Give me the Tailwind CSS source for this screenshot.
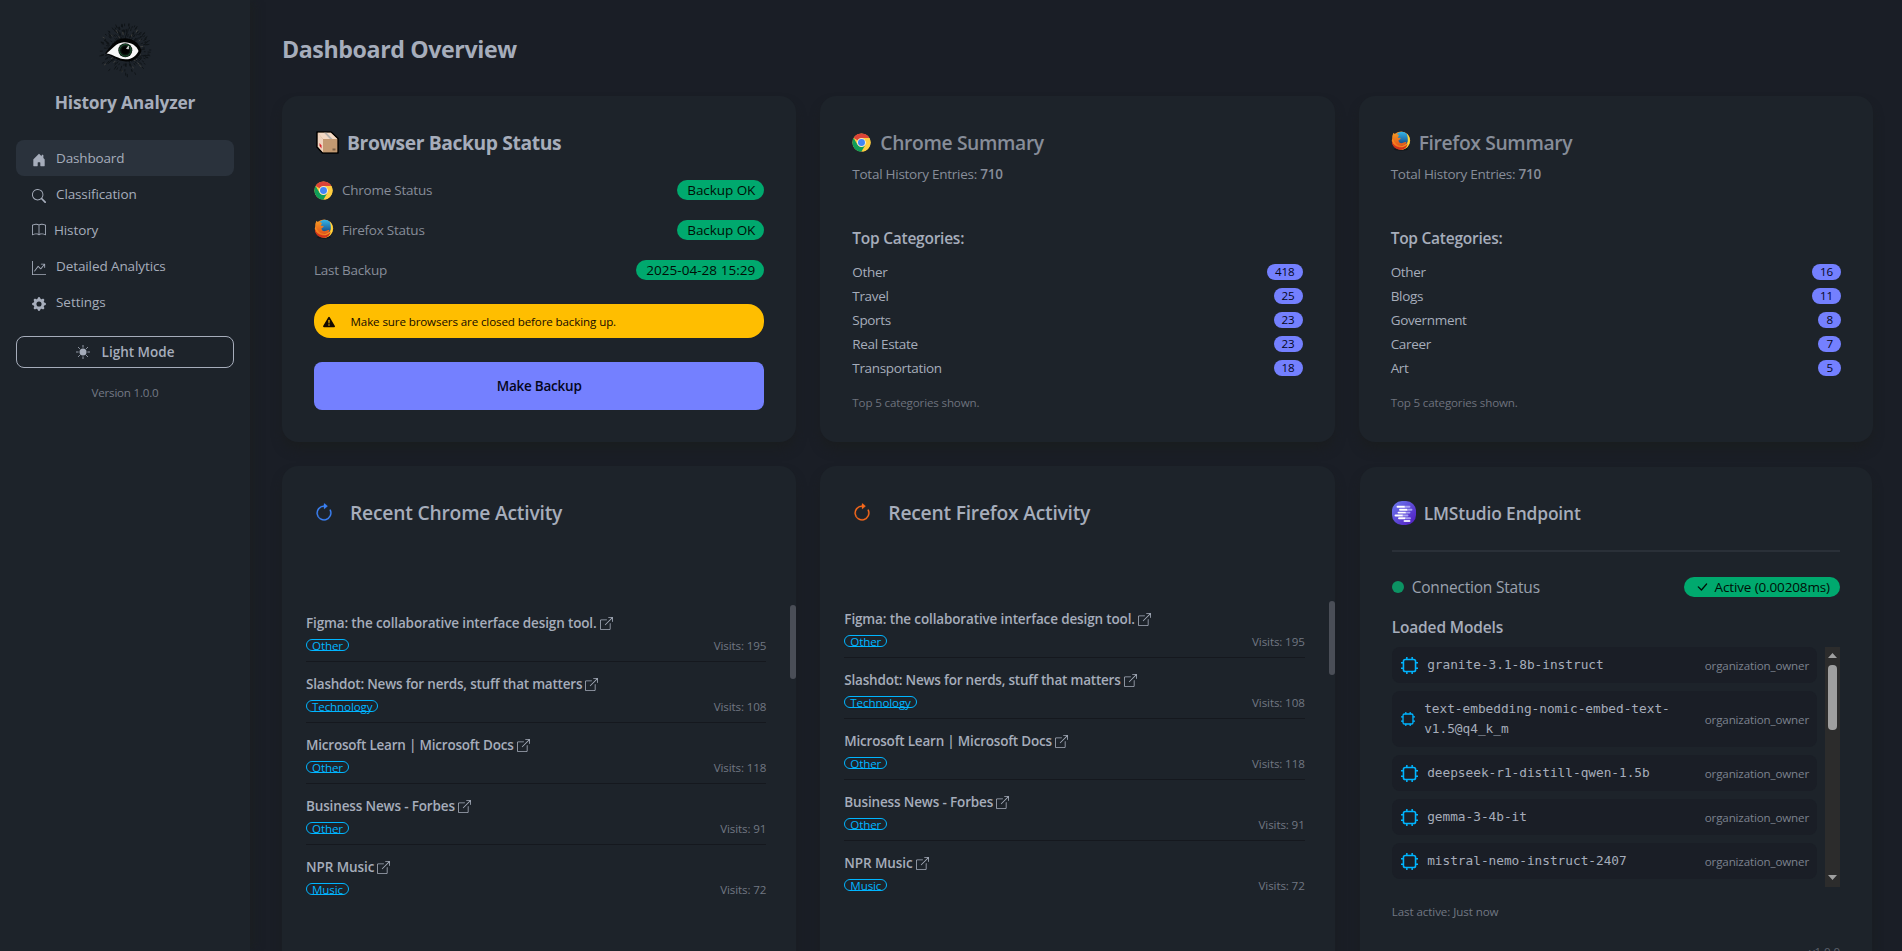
<!DOCTYPE html>
<html lang="en">
<head>
<meta charset="utf-8">
<title>History Analyzer</title>
<script src="https://cdn.jsdelivr.net/npm/@tailwindcss/browser@4"></script>
</head>
<body class="h-[951px] overflow-hidden bg-[#1a1e26] font-['Open_Sans','Noto_Sans',sans-serif] text-[#a6adbb] text-[13.5px] leading-5 whitespace-nowrap">

<svg class="absolute size-0">
  <symbol id="chrome" viewBox="0 0 48 48">
    <circle cx="24" cy="24" r="23" fill="#ffcd40"/>
    <path d="M4.1 12.5A23 23 0 0 1 43.9 12.5H24A11.5 11.5 0 0 0 14 18.2Z" fill="#db4437"/>
    <path d="M43.9 12.5H24a11.5 11.5 0 0 1 10 17.2L24 47A23 23 0 0 0 43.900 12.500Z" fill="#ffcd40"/>
    <path d="M4.100 12.500 14 29.700A11.500 11.500 0 0 0 34 29.700L24 47A23 23 0 0 1 4.100 12.500Z" fill="#0f9d58"/>
    <circle cx="24" cy="24" r="11" fill="#f1f1f1"/>
    <circle cx="24" cy="24" r="8.800" fill="#4285f4"/>
  </symbol>
  <symbol id="firefox" viewBox="0 0 48 48">
    <ellipse cx="24" cy="44" rx="17" ry="3.500" fill="#0b0e12" opacity=".6"/>
    <circle cx="24" cy="23" r="22" fill="url(#fxFlame)"/>
    <circle cx="26" cy="18" r="16.500" fill="url(#fxGlobe)"/>
    <path d="M3 12 6 4l5 5c3-2 6-1 8 1l-3 6 7 1c1 2-2 4-5 5 0 5 4 8 9 7 4-1 6-4 10-2-2 7-9 10-16 8C11 33 5 24 3 12Z" fill="url(#fxFox)"/>
    <path d="M38 6c7 6 9 16 6 24-3 9-11 15-20 15 10-3 15-10 16-18 1-8 0-14-2-21Z" fill="#ffd83a"/>
    <path d="M2 24c3 9 9 14 18 15 8 1 14-2 20-8-2 9-9 14-17 14C11 45 2 36 2 24Z" fill="#d2321a"/>
  </symbol>
  <symbol id="open" viewBox="0 0 16 16">
    <path d="M8.636 3.5a.5.5 0 0 0-.5-.5H1.500A1.500 1.500 0 0 0 0 4.500v10A1.500 1.500 0 0 0 1.500 16h10a1.500 1.500 0 0 0 1.500-1.500V7.864a.5.5 0 0 0-1 0V14.500a.5.5 0 0 1-.5.5h-10a.5.5 0 0 1-.5-.5v-10a.5.5 0 0 1 .5-.5h6.636a.5.5 0 0 0 .5-.5M16 .5a.5.5 0 0 0-.5-.5h-5a.5.5 0 0 0 0 1h3.793L6.146 9.146a.5.5 0 1 0 .708.708L15 1.707V5.500a.5.5 0 0 0 1 0z"/>
  </symbol>
  <symbol id="reload" viewBox="0 0 16 16">
    <path fill-rule="evenodd" d="M8 3a5 5 0 1 0 4.546 2.914.5.5 0 0 1 .908-.417A6 6 0 1 1 8 2z"/>
    <path d="M8 4.466V.534a.25.25 0 0 1 .41-.192l2.360 1.966c.12.1.12.284 0 .384L8.410 4.658A.25.25 0 0 1 8 4.466"/>
  </symbol>
  <symbol id="cpu" viewBox="0 0 16 16">
    <rect x="2.300" y="2.300" width="11.400" height="11.400" rx="1.800" fill="none" stroke="#00b5ff" stroke-width="1.500"/>
    <path d="M5.500 0v2.500M10.500 0v2.500M5.500 13.500V16M10.500 13.500V16M0 5.500h2.500M0 10.500h2.500M13.500 5.500H16M13.500 10.500H16" stroke="#00b5ff" stroke-width="1.400"/>
  </symbol>
  <defs>
    <linearGradient id="fxFlame" x1="0" y1="0" x2="1" y2="1"><stop offset="0" stop-color="#ff9a1f"/><stop offset=".6" stop-color="#f0701c"/><stop offset="1" stop-color="#ffcf2e"/></linearGradient>
    <linearGradient id="fxGlobe" x1="0" y1="0" x2="0" y2="1"><stop offset="0" stop-color="#35b8ea"/><stop offset="1" stop-color="#123f7d"/></linearGradient>
    <linearGradient id="fxFox" x1="0" y1="0" x2="0" y2="1"><stop offset="0" stop-color="#f79a21"/><stop offset="1" stop-color="#e2561b"/></linearGradient>
    <linearGradient id="lm" x1="0" y1="0" x2="1" y2="1"><stop offset="0" stop-color="#6d7cf0"/><stop offset="1" stop-color="#4f17be"/></linearGradient>
  </defs>
</svg>

<div class="flex h-[951px] overflow-hidden">
  <!-- Sidebar -->
  <aside class="relative z-10 w-[250px] shrink-0 bg-[#1d232a] px-4 pt-[22px] shadow-[6px_0_8px_-2px_#1b1f22]">
    <svg class="mx-auto block size-[56px]" viewBox="-2 0 56 56" id="logo">
      <g id="rays" stroke-width="1.100" stroke-linecap="round"></g>
      <path d="M6 31.500C10 27 15 16.500 25.500 16.300c9 0 15.500 6 17 12.700-2.500 6.500-8 10.800-15.500 10.500C18 39 14 34 6 31.500Z" fill="#020303"/>
      <path d="M7.500 31.500C13 27.500 17 20.500 25 20.300c8 0 13 4 14.500 8.700-2 5-7 8.500-13 8.300C19 37 15 32.500 7.500 31.500Z" fill="#f7f7f7"/>
      <circle cx="26.300" cy="28.300" r="7" fill="#0d1310"/>
      <circle cx="26.300" cy="28.300" r="5.800" fill="none" stroke="#1c5a32" stroke-width="1"/>
      <circle cx="26.300" cy="28.300" r="3.800" fill="#000"/>
      <path d="M27.500 26.500 29.500 24v3z" fill="#e8e8e8" stroke="#e8e8e8" stroke-width=".6"/>
    </svg>
    <h1 class="mt-[10px] text-center text-[17.4px] leading-7 font-bold tracking-[-0.2px]">History Analyzer</h1>
    <nav class="mt-6">
      <a class="flex h-9 items-center rounded-lg bg-[#2a323c] pl-4 text-[13.5px] tracking-[-0.15px]"><svg class="mt-1 mr-[10px] size-[14px] fill-current" viewBox="0 0 16 16"><path d="M6.500 14.500v-3.505c0-.245.25-.495.5-.495h2c.25 0 .5.25.5.5v3.500a.5.5 0 0 0 .5.5h4a.5.5 0 0 0 .5-.5v-7a.5.5 0 0 0-.146-.354L13 5.793V2.500a.5.5 0 0 0-.5-.5h-1a.5.5 0 0 0-.5.5v1.293L8.354 1.146a.5.5 0 0 0-.708 0l-6 6A.5.5 0 0 0 1.500 7.500v7a.5.5 0 0 0 .5.5h4a.5.5 0 0 0 .5-.5"/></svg>Dashboard</a>
      <a class="flex h-9 items-center pl-4 tracking-[-0.12px]"><svg class="mt-1 mr-[10px] size-[14px] fill-current" viewBox="0 0 16 16"><path d="M11.742 10.344a6.500 6.500 0 1 0-1.397 1.398h-.001q.044.06.098.115l3.850 3.850a1 1 0 0 0 1.415-1.414l-3.850-3.850a1 1 0 0 0-.115-.1zM12 6.500a5.500 5.500 0 1 1-11 0 5.500 5.500 0 0 1 11 0"/></svg>Classification</a>
      <a class="flex h-9 items-center pl-4 tracking-[-0.12px]"><svg class="mr-2 size-[14px] fill-current" viewBox="0 0 16 16"><path d="M1 2.828c.885-.37 2.154-.769 3.388-.893 1.330-.134 2.458.063 3.112.752v9.746c-.935-.53-2.120-.603-3.213-.493-1.180.12-2.370.461-3.287.811zm7.500-.141c.654-.689 1.782-.886 3.112-.752 1.234.124 2.503.523 3.388.893v9.923c-.918-.35-2.107-.692-3.287-.81-1.094-.111-2.278-.039-3.213.492zM8 1.783C7.015.936 5.587.81 4.287.94c-1.514.153-3.042.672-3.994 1.105A.5.5 0 0 0 0 2.500v11a.5.5 0 0 0 .707.455c.882-.4 2.303-.881 3.680-1.020 1.409-.142 2.590.087 3.223.877a.5.5 0 0 0 .78 0c.633-.79 1.814-1.019 3.222-.877 1.378.139 2.800.62 3.681 1.020A.5.5 0 0 0 16 13.500v-11a.5.5 0 0 0-.293-.455c-.952-.433-2.480-.952-3.994-1.105C10.413.809 8.985.936 8 1.783"/></svg>History</a>
      <a class="flex h-9 items-center pl-4 tracking-[-0.1px]"><svg class="mt-1 mr-[10px] size-[14px] fill-current" viewBox="0 0 16 16"><path fill-rule="evenodd" d="M0 0h1v15h15v1H0zm10 3.500a.5.5 0 0 1 .5-.5h4a.5.5 0 0 1 .5.5v4a.5.5 0 0 1-1 0V4.900l-3.613 4.417a.5.5 0 0 1-.74.037L7.060 6.767l-3.656 5.027a.5.5 0 0 1-.808-.588l4-5.500a.5.5 0 0 1 .758-.06l2.609 2.610L13.445 4H10.500a.5.5 0 0 1-.5-.5"/></svg>Detailed Analytics</a>
      <a class="flex h-9 items-center pl-4 tracking-[-0.05px]"><svg class="mt-1 mr-[10px] size-[14px] fill-current" viewBox="0 0 16 16"><path d="M9.405 1.050c-.413-1.400-2.397-1.400-2.810 0l-.1.34a1.464 1.464 0 0 1-2.105.872l-.31-.17c-1.283-.698-2.686.705-1.987 1.987l.169.311c.446.82.023 1.841-.872 2.105l-.34.1c-1.400.413-1.400 2.397 0 2.810l.34.1a1.464 1.464 0 0 1 .872 2.105l-.17.31c-.698 1.283.705 2.686 1.987 1.987l.311-.169a1.464 1.464 0 0 1 2.105.872l.1.34c.413 1.400 2.397 1.400 2.810 0l.1-.34a1.464 1.464 0 0 1 2.105-.872l.31.17c1.283.698 2.686-.705 1.987-1.987l-.169-.311a1.464 1.464 0 0 1 .872-2.105l.34-.1c1.400-.413 1.400-2.397 0-2.810l-.34-.1a1.464 1.464 0 0 1-.872-2.105l.17-.31c.698-1.283-.705-2.686-1.987-1.987l-.311.169a1.464 1.464 0 0 1-2.105-.872zM8 10.930a2.929 2.929 0 1 1 0-5.860 2.929 2.929 0 0 1 0 5.858z"/></svg>Settings</a>
    </nav>
    <button class="mt-4 flex h-8 w-full items-center justify-center rounded-lg border border-[#a6adbb] font-semibold"><svg class="mr-3 size-[14px]" viewBox="0 0 16 16"><circle cx="8" cy="8" r="4" fill="#a6adbb"/><path d="M8 .5v2M8 13.500v2M.5 8h2M13.500 8h2M2.700 2.700l1.400 1.400M11.900 11.900l1.400 1.400M13.300 2.700l-1.400 1.400M4.100 11.900l-1.400 1.400" stroke="#a6adbb" stroke-linecap="round"/></svg>Light Mode</button>
    <p class="mt-[15px] text-center text-[11.6px] tracking-[-0.22px] text-[#747a86]">Version 1.0.0</p>
  </aside>

  <main class="w-[1623px] shrink-0 pt-8 pl-8">
    <h2 class="text-[23.2px] leading-[34px] font-bold tracking-[-0.4px]">Dashboard Overview</h2>

    <div class="mt-[30px] grid grid-cols-3 gap-6">
      <!-- Backup status -->
      <section class="h-[346px] rounded-2xl bg-[#1d232a] p-8 shadow-[0_8px_12px_-2px_#1a1d1f]">
        <h3 class="flex h-[29px] items-center pl-[2px] text-[19.3px] font-bold tracking-[-0.4px]">
          <svg class="mr-2 size-[23px]" viewBox="0 0 23 23"><path d="M1 1h14l7 6.500V22H6.500L1 16Z" fill="#caa077" stroke="#000" stroke-width="1.600" stroke-linejoin="round"/><path d="M1.800 1.800h13L21.200 8H7Z" fill="#f3d9c4"/><path d="M1.800 1.800 7 8v13.300L1.800 15.500Z" fill="#eed3be"/><path d="M7 8h14.200v13.200H7Z" fill="#c39a72"/><path d="m8 1.800 6 6.200h2.500L10.500 1.800Z" fill="#b5b1ac"/><path d="m3.500 12 2 2.500v3L3.500 15Z" fill="#d8202a"/><path d="M16.500 17.500h3v2h-3z" fill="#7d6248"/></svg>Browser Backup Status</h3>
        <div class="mt-[23px] flex flex-col gap-5 tracking-[-0.24px] text-[#878d99]">
          <div class="flex h-5 items-center"><svg class="mr-[9px] size-[19px]"><use href="#chrome"/></svg>Chrome Status<span class="ml-auto flex h-5 items-center rounded-full bg-[#00a96e] pr-[9px] pl-[10px] tracking-[-0.06px] text-[#000e06]">Backup OK</span></div>
          <div class="flex h-5 items-center"><svg class="mr-2 -mt-[2px] size-5"><use href="#firefox"/></svg>Firefox Status<span class="ml-auto flex h-5 items-center rounded-full bg-[#00a96e] pr-[9px] pl-[10px] tracking-[-0.06px] text-[#000e06]">Backup OK</span></div>
          <div class="flex h-5 items-center">Last Backup<span class="ml-auto flex h-5 items-center rounded-full bg-[#00a96e] pr-[9px] pl-[10px] tracking-[0.05px] text-[#000e06]">2025-04-28 15:29</span></div>
        </div>
        <div class="mt-6 flex h-[34px] items-center rounded-2xl bg-[#ffbe00] pt-[2px] pl-[9px] text-[11.6px] tracking-[-0.12px] text-[#150a00]"><svg class="mr-[15.500px] size-3 fill-current" viewBox="0 0 16 16"><path d="M8.982 1.566a1.130 1.130 0 0 0-1.960 0L.165 13.233c-.457.778.091 1.767.98 1.767h13.713c.889 0 1.438-.99.98-1.767zM8 5c.535 0 .954.462.9.995l-.35 3.507a.552.552 0 0 1-1.100 0L7.100 5.995A.905.905 0 0 1 8 5m.002 6a1 1 0 1 1 0 2 1 1 0 0 1 0-2"/></svg>Make sure browsers are closed before backing up.</div>
        <button class="mt-6 h-12 w-full rounded-lg bg-[#7480ff] text-[13.5px] font-semibold tracking-[-0.24px] text-[#05061c]">Make Backup</button>
      </section>

      <!-- Summaries -->
      <section class="h-[346px] rounded-2xl bg-[#1d232a] p-8 shadow-[0_8px_12px_-2px_#1a1d1f]">
        <h3 class="flex h-[29px] items-center text-[19.3px] font-semibold tracking-[-0.36px] text-[#878d99]"><svg class="-mt-px mr-[9px] size-[19px]"><use href="#chrome"/></svg>Chrome Summary</h3>
        <p class="mt-[7px] tracking-[-0.26px] text-[#878d99]">Total History Entries: <b class="font-semibold">710</b></p>
        <h4 class="mt-11 text-[15.500px] font-semibold tracking-[-0.25px]">Top Categories:</h4>
        <ul class="mt-[14px] flex flex-col gap-1 tracking-[-0.33px]" data-list="Other:418,Travel:25,Sports:23,Real Estate:23,Transportation:18"></ul>
        <p class="mt-[15px] text-[11.6px] tracking-[-0.15px] text-[#6d727d]">Top 5 categories shown.</p>
      </section>
      <section class="h-[346px] rounded-2xl bg-[#1d232a] p-8 shadow-[0_8px_12px_-2px_#1a1d1f]">
        <h3 class="flex h-[29px] items-center text-[19.3px] font-semibold tracking-[-0.36px] text-[#878d99]"><svg class="-mt-[3px] mr-2 size-5"><use href="#firefox"/></svg>Firefox Summary</h3>
        <p class="mt-[7px] tracking-[-0.26px] text-[#878d99]">Total History Entries: <b class="font-semibold">710</b></p>
        <h4 class="mt-11 text-[15.500px] font-semibold tracking-[-0.25px]">Top Categories:</h4>
        <ul class="mt-[14px] flex flex-col gap-1 tracking-[-0.33px]" data-list="Other:16,Blogs:11,Government:8,Career:7,Art:5"></ul>
        <p class="mt-[15px] text-[11.6px] tracking-[-0.15px] text-[#6d727d]">Top 5 categories shown.</p>
      </section>

      <!-- Recent activity -->
      <section class="relative h-[620px] rounded-2xl bg-[#1d232a] pt-8 pr-[30px] pl-6 shadow-[0_8px_12px_-2px_#1a1d1f]">
        <h3 class="flex h-[29px] items-center pl-2 text-[19.3px] font-semibold tracking-[-0.22px]"><svg class="mr-4 size-5 fill-[#3b82f6] stroke-[#3b82f6] stroke-[0.2]"><use href="#reload"/></svg>Recent Chrome Activity</h3>
        <ul class="mt-[74px]" data-visits></ul>
        <div class="absolute top-[139px] right-0 h-[74px] w-[6px] rounded-full bg-[#4a4e57]"></div>
      </section>
      <section class="relative h-[620px] rounded-2xl bg-[#1d232a] pt-8 pr-[30px] pl-6 shadow-[0_8px_12px_-2px_#1a1d1f]">
        <h3 class="flex h-[29px] items-center pl-2 text-[19.3px] font-semibold tracking-[-0.24px]"><svg class="mr-4 size-5 fill-[#f96a1c] stroke-[#f96a1c] stroke-[0.2]"><use href="#reload"/></svg>Recent Firefox Activity</h3>
        <ul class="mt-[70px]" data-visits></ul>
        <div class="absolute top-[135px] right-0 h-[74px] w-[6px] rounded-full bg-[#4a4e57]"></div>
      </section>

      <!-- LMStudio -->
      <section class="m-px h-[620px] rounded-2xl bg-[#1d232a] p-8 shadow-[0_8px_12px_-2px_#1a1d1f]">
        <h3 class="flex h-7 items-center text-[17.4px] font-semibold tracking-[-0.15px]"><svg class="mr-2 size-6" viewBox="0 0 24 24"><rect width="24" height="24" rx="10" fill="url(#lm)"/><g stroke-width="1.900" stroke-linecap="round"><path d="M5.500 5.800h7" stroke="#fff"/><path d="M13.500 5.800h4" stroke="#a9a2f2"/><path d="M8 8.700h7" stroke="#fff"/><path d="M16 8.700h3.500" stroke="#a9a2f2"/><path d="M6.500 11.600h7" stroke="#fff"/><path d="M14.500 11.600h3" stroke="#a9a2f2"/><path d="M3.500 14.500h7" stroke="#fff"/><path d="M11.500 14.500h4" stroke="#a9a2f2"/><path d="M7 17.300h6" stroke="#fff"/><path d="M14 17.300h4" stroke="#a9a2f2"/><path d="M12.500 20h5" stroke="#e4e0fc"/></g></svg>LMStudio Endpoint</h3>
        <div class="mt-[23px] h-[2px] bg-[#2a3038]"></div>
        <div class="mt-[25px] flex h-5 items-center text-[15.500px] tracking-[-0.2px] text-[#9aa1ae]"><span class="mr-2 size-3 rounded-full bg-[#0c9363]"></span>Connection Status<span class="ml-auto flex h-5 items-center rounded-full bg-[#00a96e] pr-[10px] pl-[11px] text-[13.5px] tracking-[-0.13px] text-[#000e06]"><svg class="mr-[6px] size-[14px] fill-current" viewBox="0 0 16 16"><path d="M12.736 3.970a.733.733 0 0 1 1.047 0c.286.289.29.756.01 1.050L7.880 12.010a.733.733 0 0 1-1.065.02L3.217 8.384a.757.757 0 0 1 0-1.060.733.733 0 0 1 1.047 0l3.052 3.093 5.400-6.425z"/></svg>Active (0.00208ms)</span></div>
        <h4 class="mt-5 text-[15.500px] font-semibold tracking-[-0.14px]">Loaded Models</h4>
        <div class="mt-[10px] flex h-[240px]">
          <ul id="models" class="mr-2 flex flex-1 flex-col gap-2 font-['DejaVu_Sans_Mono',monospace] text-[12.8px]"></ul>
          <svg class="h-[240px] w-[15px]" viewBox="0 0 15 240"><rect width="15" height="240" fill="#2c2c2c"/><path d="M3 11 7.500 6 12 11zM3 228 7.500 233 12 228z" fill="#a0a0a0"/><rect x="3" y="18" width="9" height="65" rx="4" fill="#9f9f9f"/></svg>
        </div>
        <p class="mt-[15px] text-[11.6px] tracking-[-0.08px] text-[#717782]">Last active: Just now</p>
        <p class="mt-[20px] text-right text-[11.6px] tracking-[-0.12px] text-[#5c616b]">v1.0.0</p>
      </section>
    </div>
  </main>
</div>

<script>
  document.querySelectorAll('[data-list]').forEach(ul => {
    ul.innerHTML = ul.dataset.list.split(',').map(e => {
      const [name, n] = e.split(':');
      return `<li class="flex h-5 items-center">${name}<span class="ml-auto flex h-4 items-center rounded-full bg-[#7480ff] px-2 text-[11.6px] tracking-[-0.1px] text-[#05061c]">${n}</span></li>`;
    }).join('');
  });

  const visits = [
    ['<span class="tracking-[-0.14px]">Figma: the collaborative interface design tool.</span>', 'Other', 195],
    ['Slashdot: News for nerds, stuff that matters', 'Technology', 108],
    ['Microsoft Learn | Microsoft Docs', 'Other', 118],
    ['<span class="tracking-[-0.15px]">Business News - Forbes</span>', 'Other', 91],
    ['<span class="tracking-[-0.08px]">NPR Music</span>', 'Music', 72],
  ];
  document.querySelectorAll('[data-visits]').forEach(ul => {
    ul.innerHTML = visits.map(([title, cat, n]) => `
      <li class="h-[61px] border-b border-[#15181e] pt-3 last:border-0">
        <div class="flex h-5 items-center font-semibold tracking-[-0.21px]">${title}<svg class="mt-px ml-[3px] size-[13px] fill-current"><use href="#open"/></svg></div>
        <div class="mt-[6px] flex h-3 items-center justify-between text-[11.6px] tracking-[-0.12px]">
          <span class="flex h-3 items-center rounded-full border border-[#00b5ff] px-[5px] text-[#00b5ff]"><span class="pt-px">${cat}</span></span>
          <span class="pt-px text-[#717782]">Visits: ${n}</span>
        </div>
      </li>`).join('');
  });

  const models = ['granite-3.1-8b-instruct', 'text-embedding-nomic-embed-text-<br>v1.5@q4_k_m', 'deepseek-r1-distill-qwen-1.5b', 'gemma-3-4b-it', 'mistral-nemo-instruct-2407'];
  document.getElementById('models').innerHTML = models.map(m => {
    const icon = m.includes('<br>')
      ? '<svg class="mr-[9px] size-[14px]"><use href="#cpu"/></svg>'
      : '<svg class="mr-[9px] size-[17px]"><use href="#cpu"/></svg>';
    return `<li class="flex items-center rounded-lg bg-[#1a1e26] py-2 pr-2 pl-[9.5px]">${icon}<span class="tracking-[-0.03px]">${m}</span><span class="ml-auto pt-px font-['Open_Sans',sans-serif] text-[11.6px] leading-[18px] tracking-[-0.15px] text-[#7c828e]">organization_owner</span></li>`;
  }).join('');

  // Short radial dashes scattered around the eye
  let seed = 7, rays = '';
  const rnd = () => (seed = (seed * 16807) % 2147483647) / 2147483647;
  for (let i = 0; i < 240; i++) {
    const a = rnd() * Math.PI * 2, r = 11 + rnd() * 14, l = 1 + rnd() * 1.5, c = Math.cos(a), s = Math.sin(a);
    rays += `<path d="M${26.5 + c * r} ${28 + s * r}L${26.5 + c * (r + l)} ${28 + s * (r + l)}" stroke="${rnd() < .07 ? '#44443f' : '#0f1316'}" stroke-width=".9"/>`;
  }
  document.getElementById('rays').innerHTML = rays;
</script>
</body>
</html>
